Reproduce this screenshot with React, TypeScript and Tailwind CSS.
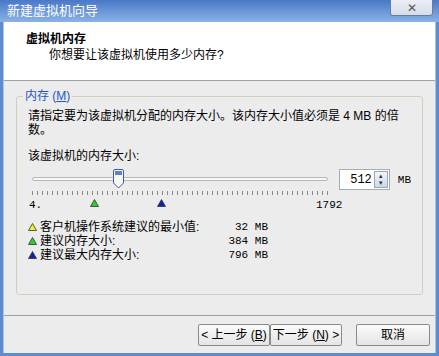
import React from 'react';

const cjk = "font-['Tahoma','Liberation_Sans','Noto_Sans_CJK_SC',sans-serif]";
const mono = "font-['Liberation_Mono','Noto_Sans_CJK_SC',monospace]";

const Tri: React.FC<{ color: string }> = ({ color }) => (
  <svg width="9" height="8" viewBox="0 0 9 8" className="shrink-0">
    <polygon points="4.5,0.5 8.5,7.5 0.5,7.5" fill={color} stroke="#333" strokeWidth="0.8" />
  </svg>
);

const Button: React.FC<{ className?: string; children: React.ReactNode }> = ({ className = '', children }) => (
  <div
    className={`flex h-[22px] items-center justify-center rounded-[2px] border border-[#8a8a8a] bg-gradient-to-b from-[#fbfbfb] to-[#e4e4e4] text-[12px] text-black ${className}`}
  >
    {children}
  </div>
);

const App: React.FC = () => {
  const ticks = Array.from({ length: 60 });
  return (
    <div className={`flex h-[356px] w-[439px] flex-col overflow-hidden bg-[#5f8bd0] ${cjk} text-[12px] leading-[14px] text-black`}>
      {/* title bar */}
      <div className="flex h-[22px] shrink-0 items-start justify-between bg-gradient-to-b from-[#4a78c6] to-[#8bb2e6] pl-[7px] pr-[6px]">
        <span className="mt-[3px] text-[13px] leading-[16px] text-white">新建虚拟机向导</span>
        <div className="mt-[-3px] flex h-[19px] w-[43px] items-center justify-center rounded-b-[3px] border border-[#6b7c98] bg-gradient-to-b from-[#eef1f6] to-[#d6dce8] pt-[2px] text-[12px] text-[#555]">
          ✕
        </div>
      </div>

      <div className="mx-[3px] mb-[3px] flex flex-1 flex-col border-l border-r border-[#a9c4ec] bg-[#ececec]">
        {/* header */}
        <div className="h-[59px] shrink-0 border-b border-[#a0a0a0] bg-white pl-[22px] pt-[11px]">
          <div className="font-bold leading-[13px]">虚拟机内存</div>
          <div className="mt-[3px] pl-[23px] leading-[13px]">你想要让该虚拟机使用多少内存?</div>
        </div>

        {/* body */}
        <div className="flex flex-1 flex-col px-[12px] pt-[15px]">
          <div className="relative h-[199px] rounded-[3px] border border-[#d0d0bf] px-[11px] pt-[12px]">
            <span className="absolute left-[6px] top-[-8px] bg-[#ececec] px-[2px] text-[#1f54c6]">内存 (<u>M</u>)</span>
            <p className="w-[382px] leading-[14px]">
              请指定要为该虚拟机分配的内存大小。该内存大小值必须是 4 MB 的倍数。
            </p>
            <div className="mt-[12px]">该虚拟机的内存大小:</div>

            <div className="mt-[6px] flex items-start">
              <div className="w-[314px]">
                <div className="relative h-[22px]">
                  <div className="absolute left-[4px] right-[10px] top-[8px] h-[4px] rounded-[2px] border border-[#b8b8b8] bg-[#f7f7f7]" />
                  <svg className="absolute left-[85px] top-0" width="11" height="20" viewBox="0 0 11 20">
                    <path d="M0.5,2 Q0.5,0.5 2,0.5 L9,0.5 Q10.5,0.5 10.5,2 L10.5,14 L5.5,19 L0.5,14 Z" fill="#f6f6f6" stroke="#3d5f96" />
                    <path d="M2,2 L9,2 L9,6 L2,6 Z" fill="#5a86c8" />
                  </svg>
                </div>
                <div className="flex h-[5px] justify-between pl-[4px] pr-[10px]">
                  {ticks.map((_, i) => (
                    <div key={i} className="h-[4px] w-px bg-[#888]" />
                  ))}
                </div>
                <div className="relative mt-[1px] h-[14px]">
                  <span className={`absolute left-[1px] top-[1px] ${mono} text-[11px]`}>4.</span>
                  <span className="absolute left-[62px] top-[2px]"><Tri color="#2ad02a" /></span>
                  <span className="absolute left-[129px] top-[2px]"><Tri color="#1020b0" /></span>
                  <span className={`absolute left-[288px] top-[1px] ${mono} text-[11px]`}>1792</span>
                </div>
              </div>
              <div className="ml-[1px] flex h-[21px] w-[51px] items-center border border-[#a5acb5] bg-white">
                <span className={`flex-1 pr-[2px] text-right ${mono} text-[12px]`}>512</span>
                <div className="mr-[1px] flex h-[17px] w-[14px] flex-col border border-[#98a6bd] bg-gradient-to-b from-[#f3f6fb] to-[#cdd7e8]">
                  <div className="flex flex-1 items-center justify-center text-[6px] leading-none text-[#333]">▲</div>
                  <div className="flex flex-1 items-center justify-center text-[6px] leading-none text-[#333]">▼</div>
                </div>
              </div>
              <span className={`ml-[8px] mt-[4px] ${mono} text-[11px]`}>MB</span>
            </div>

            <div className="mt-[10px] flex w-[240px] flex-col gap-[2px]">
              {[
                { c: '#f2f225', t: '客户机操作系统建议的最小值:', v: '32 MB' },
                { c: '#2ad02a', t: '建议内存大小:', v: '384 MB' },
                { c: '#1020b0', t: '建议最大内存大小:', v: '796 MB' },
              ].map((r) => (
                <div key={r.t} className="flex h-[12px] items-center">
                  <Tri color={r.c} />
                  <span className="ml-[3px] flex-1">{r.t}</span>
                  <span className={`${mono} text-[11px]`}>{r.v}</span>
                </div>
              ))}
            </div>
          </div>
        </div>

        {/* buttons */}
        <div className="mt-[10px] flex h-[38px] shrink-0 items-center justify-end gap-[14px] border-t border-[#a0a0a0] pr-[5px]">
          <div className="flex">
            <Button className="w-[72px]">&lt; 上一步 (<u>B</u>)</Button>
            <Button className="w-[72px]">下一步 (<u>N</u>) &gt;</Button>
          </div>
          <Button className="w-[74px]">取消</Button>
        </div>
      </div>
    </div>
  );
};

export default App;
